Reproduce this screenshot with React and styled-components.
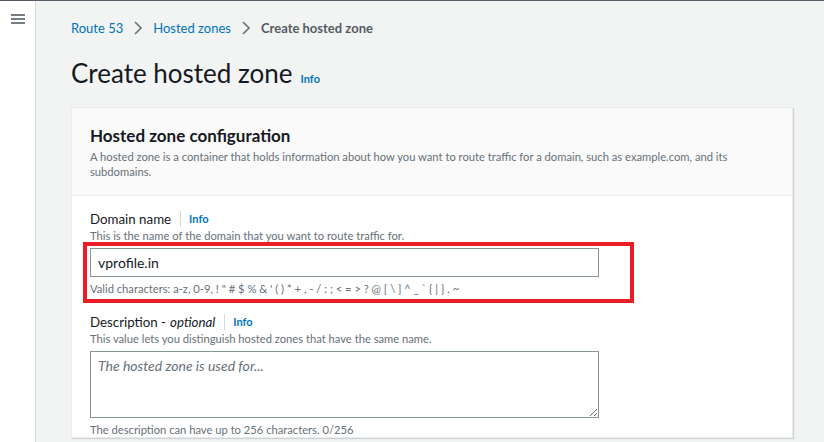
import styled, { createGlobalStyle } from "styled-components";

const GlobalStyle = createGlobalStyle`
  html, body {
    margin: 0;
    padding: 0;
    height: 442px;
    overflow: hidden;
    background: #f2f3f3;
    font-family: Lato, "Open Sans", sans-serif;
    color: #16191f;
  }
`;

const Shell = styled.div`
  display: flex;
  height: 442px;
  border-top: 1px solid #545b64;
  box-sizing: border-box;
`;

const Sidebar = styled.div`
  width: 36px;
  flex-shrink: 0;
  background: #fff;
  border-right: 1px solid #d5dbdb;
  display: flex;
  justify-content: center;
  padding-top: 12px;
  box-sizing: border-box;
`;

const Main = styled.main`
  flex: 1;
  padding: 16px 31px 0 35px;
`;

const Breadcrumbs = styled.nav`
  display: flex;
  align-items: center;
  gap: 10px;
  font-size: 13px;
  height: 22px;
`;

const Crumb = styled.span`
  color: ${(p) => (p.current ? "#545b64" : "#0073bb")};
  font-weight: ${(p) => (p.current ? 700 : 400)};
`;

const TitleRow = styled.div`
  display: flex;
  align-items: baseline;
  gap: 8px;
  margin: 18px 0 18px;
`;

const Title = styled.h1`
  margin: 0;
  font-size: 26px;
  font-weight: 400;
  line-height: 32px;
  color: #16191f;
`;

const InfoLink = styled.span`
  font-size: 11px;
  font-weight: 700;
  color: #0073bb;
`;

const Card = styled.section`
  background: #fff;
  border: 1px solid #eaeded;
  box-shadow: 1px 1px 1px rgba(0, 28, 36, 0.15);
`;

const CardHeader = styled.header`
  background: #fafafa;
  border-bottom: 1px solid #eaeded;
  padding: 17px 18px 16px;
`;

const CardTitle = styled.h2`
  margin: 0;
  font-size: 17px;
  font-weight: 700;
  line-height: 22px;
  color: #16191f;
`;

const CardDesc = styled.p`
  margin: 2px 0 0;
  font-size: 11.2px;
  line-height: 15px;
  color: #687078;
  max-width: 660px;
`;

const CardBody = styled.div`
  padding: 14px 18px 0;
  display: flex;
  flex-direction: column;
  gap: 17px;
`;

const Field = styled.div`
  position: relative;
  display: flex;
  flex-direction: column;
`;

const Label = styled.div`
  display: flex;
  align-items: center;
  font-size: 13.3px;
  line-height: 18px;
  color: #16191f;

  em {
    margin-left: 4px;
  }
`;

const Divider = styled.span`
  width: 1px;
  height: 16px;
  background: #d5dbdb;
  margin: 0 8px 0 9px;
`;

const Hint = styled.div`
  font-size: 11.2px;
  line-height: 15px;
  color: #687078;
  margin-top: ${(p) => p.top || 0}px;
`;

const Input = styled.input`
  box-sizing: border-box;
  width: 509px;
  height: 29px;
  margin-top: 5px;
  border: 1px solid #879596;
  padding: 0 7px;
  font-family: inherit;
  font-size: 14px;
  color: #16191f;
  background: #fff;
  outline: none;
`;

const TextArea = styled.textarea`
  box-sizing: border-box;
  width: 509px;
  height: 67px;
  margin-top: 5px;
  border: 1px solid #879596;
  padding: 5px 7px;
  font-family: inherit;
  font-size: 14px;
  resize: vertical;
  display: block;

  &::placeholder {
    color: #687078;
    font-style: italic;
  }
`;

const Highlight = styled.div`
  position: absolute;
  left: -7px;
  top: 32px;
  width: 551px;
  height: 61px;
  border: 4px solid #ec1c24;
  box-sizing: border-box;
  pointer-events: none;
`;

const Menu = () => (
  <svg width="14" height="12" viewBox="0 0 14 12">
    <g stroke="#545b64" strokeWidth="1.6">
      <line x1="0" y1="2" x2="14" y2="2" />
      <line x1="0" y1="6" x2="14" y2="6" />
      <line x1="0" y1="10" x2="14" y2="10" />
    </g>
  </svg>
);

const Chevron = () => (
  <svg width="10" height="14" viewBox="0 0 10 14">
    <path d="M2 1l6 6-6 6" fill="none" stroke="#687078" strokeWidth="1.6" />
  </svg>
);

export default function App() {
  return (
    <>
      <GlobalStyle />
      <Shell>
        <Sidebar>
          <Menu />
        </Sidebar>
        <Main>
          <Breadcrumbs>
            <Crumb>Route 53</Crumb>
            <Chevron />
            <Crumb>Hosted zones</Crumb>
            <Chevron />
            <Crumb current>Create hosted zone</Crumb>
          </Breadcrumbs>
          <TitleRow>
            <Title>Create hosted zone</Title>
            <InfoLink>Info</InfoLink>
          </TitleRow>
          <Card>
            <CardHeader>
              <CardTitle>Hosted zone configuration</CardTitle>
              <CardDesc>
                A hosted zone is a container that holds information about how
                you want to route traffic for a domain, such as example.com,
                and its subdomains.
              </CardDesc>
            </CardHeader>
            <CardBody>
              <Field>
                <Label>
                  Domain name
                  <Divider />
                  <InfoLink>Info</InfoLink>
                </Label>
                <Hint>This is the name of the domain that you want to route traffic for.</Hint>
                <Input defaultValue="vprofile.in" />
                <Hint top={4}>
                  Valid characters: a-z, 0-9, ! " # $ % &amp; ' ( ) * + , - / : ; &lt; = &gt; ? @ [ \ ] ^ _ ` {"{"} | {"}"} . ~
                </Hint>
                <Highlight />
              </Field>
              <Field>
                <Label>
                  Description -<em>optional</em>
                  <Divider />
                  <InfoLink>Info</InfoLink>
                </Label>
                <Hint>This value lets you distinguish hosted zones that have the same name.</Hint>
                <TextArea placeholder="The hosted zone is used for..." />
                <Hint top={4}>The description can have up to 256 characters. 0/256</Hint>
              </Field>
            </CardBody>
          </Card>
        </Main>
      </Shell>
    </>
  );
}
